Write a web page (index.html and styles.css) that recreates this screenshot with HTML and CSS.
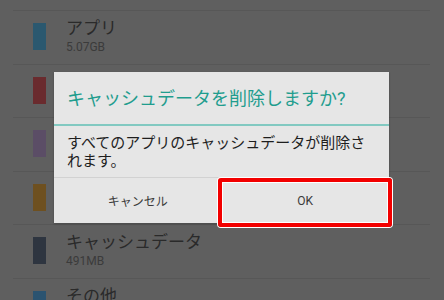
FILE: index.html
```html
<!DOCTYPE html>
<html lang="ja">
<head>
<meta charset="utf-8">
<link rel="stylesheet" href="styles.css">
</head>
<body>
<div class="screen">
  <ul class="list">
    <li class="row"><span class="swatch s-app"></span><div class="info"><div class="name">アプリ</div><div class="size">5.07GB</div></div></li>
    <li class="row"><span class="swatch s-red"></span><div class="info"><div class="name">画像、動画</div><div class="size">1.20GB</div></div></li>
    <li class="row"><span class="swatch s-purple"></span><div class="info"><div class="name">音声</div><div class="size">120MB</div></div></li>
    <li class="row"><span class="swatch s-orange"></span><div class="info"><div class="name">ダウンロード</div><div class="size">20MB</div></div></li>
    <li class="row"><span class="swatch s-navy"></span><div class="info"><div class="name">キャッシュデータ</div><div class="size">491MB</div></div></li>
    <li class="row"><span class="swatch s-blue"></span><div class="info"><div class="name">その他</div></div></li>
  </ul>

  <div class="dialog">
    <div class="title">キャッシュデータを削除しますか?</div>
    <div class="message">すべてのアプリのキャッシュデータが削除されます。</div>
    <div class="buttons">
      <div class="btn">キャンセル</div>
      <div class="btn">OK</div>
    </div>
  </div>
  <div class="highlight"></div>
</div>
</body>
</html>
```
FILE: styles.css
```css
* { box-sizing: border-box; }
html, body {
  margin: 0;
  padding: 0;
  width: 444px;
  height: 300px;
  overflow: hidden;
  background: #5f5f5f;
  font-family: Roboto, "Noto Sans CJK JP", sans-serif;
}
.screen {
  position: relative;
  width: 444px;
  height: 300px;
  overflow: hidden;
}
.list {
  list-style: none;
  margin: 0;
  padding: 10px 14px 0 13px;
}
.row {
  display: flex;
  align-items: flex-start;
  height: 53.5px;
  border-top: 1px solid #575757;
  padding: 12px 0 0 20px;
}
.swatch {
  width: 13px;
  height: 27px;
  flex: none;
}
.s-app { background: #2b586f; }
.s-red { background: #6a2b2e; }
.s-purple { background: #5b4d66; }
.s-orange { background: #6e5020; }
.s-navy { background: #2e3540; }
.s-blue { background: #2b5370; }
.info {
  margin-left: 20px;
  margin-top: -6px;
}
.name {
  font-size: 17px;
  line-height: 23px;
  color: #2a2a2a;
}
.size {
  font-size: 12px;
  line-height: 15px;
  color: #3b3b3b;
}
.dialog {
  position: absolute;
  left: 54px;
  top: 72px;
  width: 335px;
  height: 151px;
  background: #e6e6e6;
  display: flex;
  flex-direction: column;
  box-shadow: 0 1px 2px rgba(0,0,0,0.25);
}
.title {
  height: 54px;
  padding: 14px 0 0 13px;
  font-size: 18px;
  line-height: 26px;
  color: #1f9d8e;
  border-bottom: 2px solid #82c9c1;
}
.message {
  padding: 8px 13px 0 13px;
  font-size: 15px;
  line-height: 18px;
  color: #1e1e1e;
  height: 52px;
  border-bottom: 1px solid #d2d2d2;
}
.buttons {
  flex: 1;
  display: flex;
}
.btn {
  flex: 1;
  display: flex;
  align-items: center;
  justify-content: center;
  font-size: 12px;
  color: #3a3a3a;
}
.highlight {
  position: absolute;
  left: 218px;
  top: 178px;
  width: 174px;
  height: 49px;
  border: 4px solid #f20000;
  border-radius: 3px;
  box-shadow: 0 0 0 1px #ffffff, inset 0 0 0 1px #ffffff;
}
```
